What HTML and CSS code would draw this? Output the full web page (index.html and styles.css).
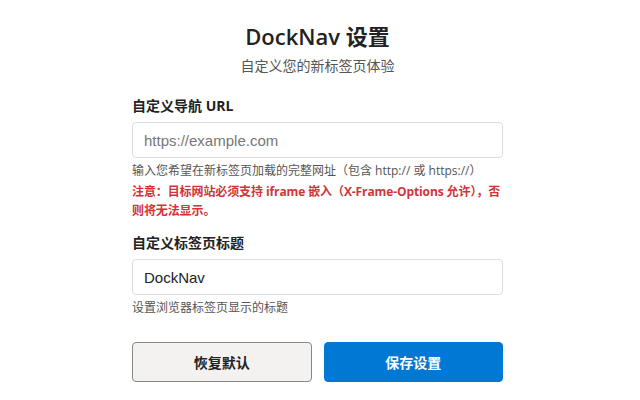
FILE: index.html
```html
<!DOCTYPE html>
<html lang="zh-CN">
<head>
    <meta charset="UTF-8">
    <meta name="viewport" content="width=device-width, initial-scale=1.0">
    <title>DockNav 设置</title>
    <link rel="stylesheet" href="styles.css">
</head>
<body>
    <div class="page">
        <div class="header">
            <h1>DockNav 设置</h1>
            <p class="subtitle">自定义您的新标签页体验</p>
        </div>

        <div class="field">
            <label class="label" for="navUrl">自定义导航 URL</label>
            <input class="input" id="navUrl" type="text" placeholder="https://example.com">
            <p class="hint">输入您希望在新标签页加载的完整网址（包含 http:// 或 https://）</p>
            <p class="warning">注意：目标网站必须支持 iframe 嵌入（X-Frame-Options 允许），否则将无法显示。</p>
        </div>

        <div class="field">
            <label class="label" for="tabTitle">自定义标签页标题</label>
            <input class="input" id="tabTitle" type="text" value="DockNav">
            <p class="hint">设置浏览器标签页显示的标题</p>
        </div>

        <div class="button-row">
            <button class="btn btn-reset">恢复默认</button>
            <button class="btn btn-save">保存设置</button>
        </div>
    </div>
</body>
</html>
```

FILE: styles.css
```css
body {
    margin: 0;
    padding-right: 5px;
    background-color: #fff;
    color: #222;
    font-family: "Open Sans", "Noto Sans CJK SC", sans-serif;
}

.page {
    width: 371px;
    margin: 0 auto;
    padding-top: 20px;
    box-sizing: border-box;
}

.header {
    text-align: center;
    margin-bottom: 20px;
}

.header h1 {
    margin: 0;
    font-size: 22px;
    line-height: 32px;
    font-weight: 600;
    color: #222;
}

.subtitle {
    margin: 4px 0 0 0;
    font-size: 14px;
    line-height: 20px;
    color: #555;
}

.field {
    margin-bottom: 13px;
}

.label {
    display: block;
    font-size: 14px;
    line-height: 20px;
    font-weight: 700;
    margin-bottom: 6px;
}

.input {
    display: block;
    width: 100%;
    height: 36px;
    box-sizing: border-box;
    padding: 0 11px;
    border: 1px solid #ddd;
    border-radius: 4px;
    font-family: "Liberation Sans", Arial, sans-serif;
    font-size: 15px;
    color: #222;
    outline: none;
}

.input::placeholder {
    color: #777;
}

.hint {
    margin: 4px 0 0 0;
    font-size: 12px;
    line-height: 18px;
    color: #555;
}

.warning {
    margin: 2px 0 0 0;
    font-size: 12px;
    line-height: 19px;
    font-weight: 700;
    color: #d13438;
    letter-spacing: -0.1px;
}

.button-row {
    display: flex;
    gap: 12px;
    margin-top: 25px;
}

.btn {
    flex: 1;
    height: 40px;
    border-radius: 4px;
    font-family: "Open Sans", "Noto Sans CJK SC", sans-serif;
    font-size: 14px;
    font-weight: 700;
    cursor: pointer;
}

.btn-reset {
    background-color: #f3f2f1;
    border: 1px solid #8a8886;
    color: #222;
}

.btn-save {
    background-color: #0078d4;
    border: 1px solid #0078d4;
    color: #fff;
}
```
